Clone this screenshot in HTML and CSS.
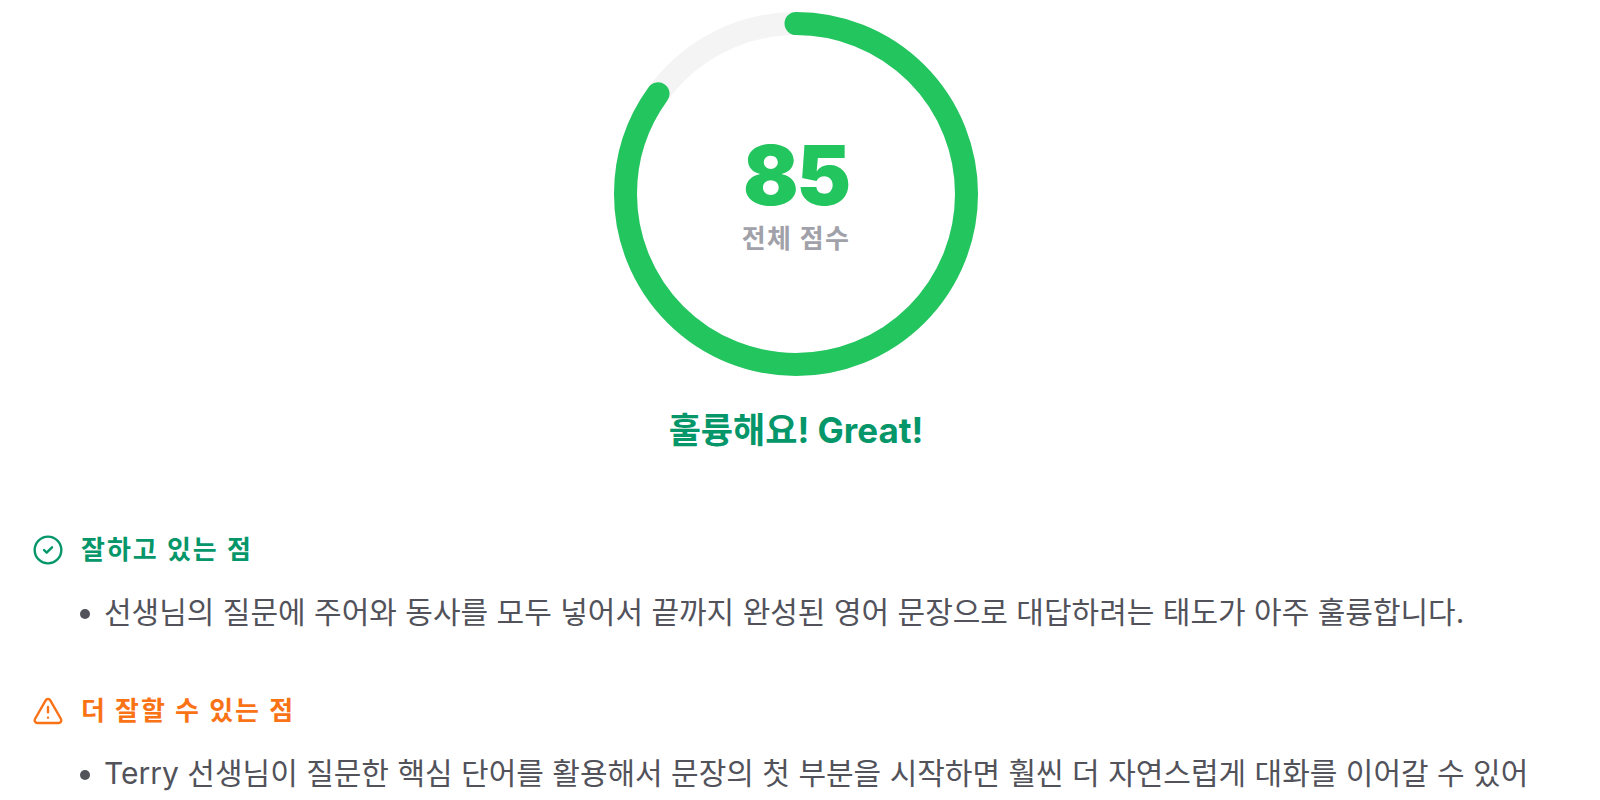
FILE: index.html
```
<!DOCTYPE html>
<html lang="ko">
<head>
  <meta charset="UTF-8">
  <meta name="viewport" content="width=device-width, initial-scale=1">
  <title>전체 점수</title>
  <link rel="stylesheet" href="styles.css">
</head>
<body>
  <main class="report">
    <!-- Score ring -->
    <section class="score">
      <div class="ring">
        <svg class="ring-chart" viewBox="0 0 364 364" aria-hidden="true">
          <circle class="ring-track" cx="182" cy="182" r="170.5"/>
          <circle class="ring-value" cx="182" cy="182" r="170.5" pathLength="100" stroke-dasharray="85 100" transform="rotate(-90 182 182)"/>
        </svg>
        <div class="ring-text">
          <span class="score-number">85</span>
          <span class="score-label">전체 점수</span>
        </div>
      </div>
      <h1 class="score-message">훌륭해요! Great!</h1>
    </section>

    <!-- Strengths -->
    <section class="feedback">
      <h2 class="feedback-title good">
        <svg class="icon" viewBox="0 0 24 24" aria-hidden="true">
          <circle cx="12" cy="12" r="10"/>
          <path d="m9 12 2 2 4-4"/>
        </svg>
        잘하고 있는 점
      </h2>
      <ul class="feedback-list">
        <li>선생님의 질문에 주어와 동사를 모두 넣어서 끝까지 완성된 영어 문장으로 대답하려는 태도가 아주 훌륭합니다.</li>
      </ul>
    </section>

    <!-- Improvements -->
    <section class="feedback">
      <h2 class="feedback-title improve">
        <svg class="icon" viewBox="0 0 24 24" aria-hidden="true">
          <path d="m21.73 18-8-14a2 2 0 0 0-3.48 0l-8 14A2 2 0 0 0 4 21h16a2 2 0 0 0 1.73-3"/>
          <path d="M12 9v4"/>
          <path d="M12 17h.01"/>
        </svg>
        더 잘할 수 있는 점
      </h2>
      <ul class="feedback-list">
        <li>Terry 선생님이 질문한 핵심 단어를 활용해서 문장의 첫 부분을 시작하면 훨씬 더 자연스럽게 대화를 이어갈 수 있어</li>
      </ul>
    </section>
  </main>
</body>
</html>
```
FILE: styles.css
```
* {
  box-sizing: border-box;
}
body {
  margin: 0;
  background-color: #ffffff;
  color: #52525b;
  font-family: Inter, "Noto Sans CJK KR", sans-serif;
}
h1, h2, ul {
  margin: 0;
  padding: 0;
}
.report {
  padding: 12px 40px 0 32px;
}

/* Score ring */
.score {
  display: flex;
  flex-direction: column;
  align-items: center;
  margin-bottom: 76px;
}
.ring {
  display: grid;
  place-items: center;
  width: 364px;
}
.ring-chart, .ring-text {
  grid-area: 1 / 1;
}
.ring-chart {
  display: block;
  width: 100%;
  fill: none;
  stroke-width: 23px;
}
.ring-track {
  stroke: #f4f4f5;
}
.ring-value {
  stroke: #22c55e;
  stroke-linecap: round;
}
.ring-text {
  display: flex;
  flex-direction: column;
  align-items: center;
  gap: 4px;
  padding-top: 4px;
}
.score-number {
  color: #22c55e;
  font-size: 82px;
  font-weight: 900;
  line-height: 82px;
  letter-spacing: -0.025em;
}
.score-label {
  color: #a1a1aa;
  font-size: 26px;
  font-weight: 700;
  line-height: 36px;
  letter-spacing: 0.05em;
}
.score-message {
  margin-top: 28px;
  color: #059669;
  font-size: 35px;
  font-weight: 700;
  line-height: 52px;
}

/* Feedback sections */
.feedback {
  margin-bottom: 57px;
}
.feedback:last-child {
  margin-bottom: 0;
}
.feedback-title {
  display: flex;
  align-items: center;
  gap: 17px;
  margin-bottom: 20px;
  font-size: 26px;
  font-weight: 700;
  line-height: 36px;
  letter-spacing: 2px;
}
.good {
  color: #059669;
}
.improve {
  color: #f97316;
}
.icon {
  flex: none;
  width: 32px;
  height: 32px;
  fill: none;
  stroke: currentColor;
  stroke-width: 1.8;
  stroke-linecap: round;
  stroke-linejoin: round;
}
.feedback-list {
  padding-left: 48px;
  list-style: none;
}
.feedback-list li {
  display: flex;
  gap: 14px;
  font-size: 30px;
  line-height: 48px;
  word-break: keep-all;
}
.feedback-list li::before {
  content: "";
  flex: none;
  width: 10px;
  height: 10px;
  margin-top: 21px;
  border-radius: 50%;
  background-color: #52525b;
}
```
